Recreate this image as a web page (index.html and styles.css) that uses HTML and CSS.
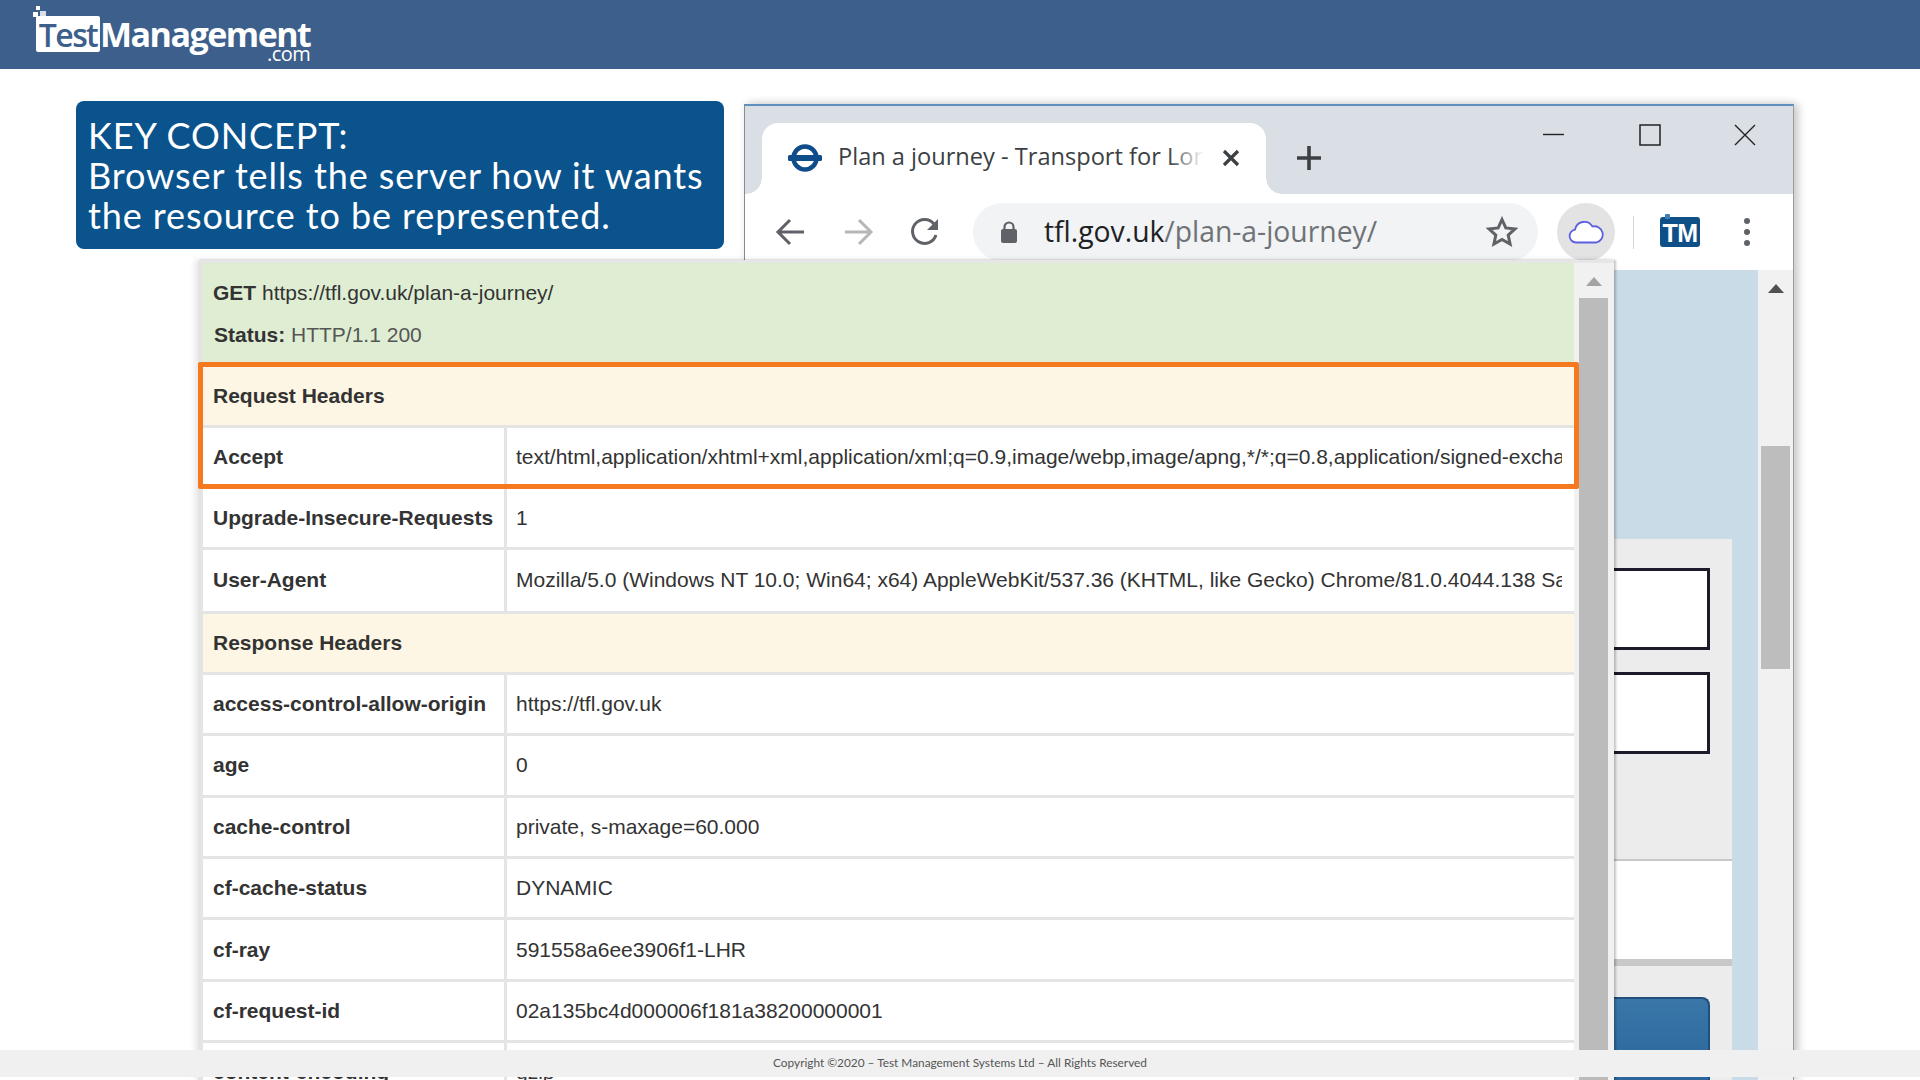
FILE: index.html
```html
<!DOCTYPE html>
<html>
  <head>
    <meta charset="utf-8">
    <title>Key concept</title>
    <link rel="stylesheet" href="styles.css">
  </head>
  <body>
    <header class="site-header">
      <div class="logo">
        <svg class="logo__dots" width="14" height="14" viewBox="0 0 14 14">
          <rect x="3" y="0" width="4" height="4" fill="#fff"/>
          <rect x="0" y="6" width="5" height="5" fill="#fff"/>
          <rect x="7" y="5" width="6" height="6" fill="#fff" opacity=".8"/>
        </svg>
        <span class="logo__test">Test</span>
        <span class="logo__name">Management<small>.com</small></span>
      </div>
    </header>

    <section class="callout">
      KEY CONCEPT:<br>
      Browser tells the server how it wants<br>
      the resource to be represented.
    </section>

    <!-- browser window behind the extension popup -->
    <section class="browser">
      <div class="tabstrip">
        <div class="tab">
          <svg class="tab__icon" width="36" height="28" viewBox="0 0 36 28">
            <circle cx="18" cy="14" r="11.5" fill="none" stroke="#0f4c8a" stroke-width="4.5"/>
            <rect x="1" y="11" width="34" height="6" rx="1.5" fill="#0f4c8a"/>
          </svg>
          <span class="tab__title">Plan a journey - Transport for London</span>
          <svg class="tab__close" width="18" height="18" viewBox="0 0 18 18">
            <path d="M2 2l14 14M16 2L2 16" stroke="#3c4043" stroke-width="3.2" fill="none"/>
          </svg>
        </div>
        <svg class="tab-new" width="26" height="26" viewBox="0 0 26 26">
          <path d="M13 1v24M1 13h24" stroke="#3c4043" stroke-width="3.6" fill="none"/>
        </svg>
        <div class="winctrls">
          <div class="winctrl"><svg width="22" height="22" viewBox="0 0 22 22"><path d="M0 10.5h21" stroke="#222" stroke-width="1.4"/></svg></div>
          <div class="winctrl"><svg width="22" height="22" viewBox="0 0 22 22"><rect x="1" y="1" width="20" height="20" fill="none" stroke="#222" stroke-width="1.5"/></svg></div>
          <div class="winctrl"><svg width="22" height="22" viewBox="0 0 22 22"><path d="M1 1l20 20M21 1L1 21" stroke="#222" stroke-width="1.4" fill="none"/></svg></div>
        </div>
      </div>

      <div class="toolbar">
        <svg class="navbtn" width="40" height="32" viewBox="0 0 40 32">
          <path d="M33 16H9M19 4L7 16l12 12" stroke="#5f6368" stroke-width="3" fill="none"/>
        </svg>
        <svg class="navbtn navbtn--next" width="40" height="32" viewBox="0 0 40 32">
          <path d="M7 16h24M21 4l12 12-12 12" stroke="#b4b6b9" stroke-width="3" fill="none"/>
        </svg>
        <svg class="navbtn navbtn--next" width="40" height="32" viewBox="0 0 40 32">
          <path d="M31 19a12 12 0 1 1-2-11" stroke="#5f6368" stroke-width="3" fill="none"/>
          <path d="M33 3v11H22z" fill="#5f6368"/>
        </svg>
        <div class="omnibox">
          <svg class="omnibox__lock" width="18" height="24" viewBox="0 0 18 24">
            <path d="M4.5 10V7a4.5 4.5 0 0 1 9 0v3" fill="none" stroke="#5f6368" stroke-width="2.2"/>
            <rect x="1" y="9" width="16" height="14" rx="2" fill="#5f6368"/>
          </svg>
          <span class="omnibox__url">tfl.gov.uk<span class="omnibox__path">/plan-a-journey/</span></span>
          <svg class="omnibox__star" width="32" height="32" viewBox="0 0 32 32">
            <path d="M16 3.5l3.8 8.4 9.2 1-6.8 6.2 1.9 9-8.1-4.6-8.1 4.6 1.9-9L3 12.9l9.2-1z" fill="none" stroke="#5f6368" stroke-width="3"/>
          </svg>
        </div>
        <div class="ext-cloud">
          <svg width="36" height="26" viewBox="0 0 36 26">
            <path d="M8 23.5a6.5 6.5 0 0 1-1-12.9A9.5 9.5 0 0 1 24.500 7.500 8 8 0 0 1 28.500 23.500z" fill="#fff" stroke="#5b5fe0" stroke-width="1.800"/>
          </svg>
        </div>
        <div class="toolbar__divider"></div>
        <div class="ext-tm">TM</div>
        <div class="kebab"><i></i><i></i><i></i></div>
      </div>

      <div class="viewport">
        <div class="viewport__main">
          <div class="form-panel">
            <div class="form-input"></div>
            <div class="form-input"></div>
            <div class="form-strip"></div>
            <div class="form-button"></div>
          </div>
        </div>
        <div class="scrollbar scrollbar--page">
          <span class="scrollbar__up"></span>
          <div class="scrollbar__thumb"></div>
        </div>
      </div>
    </section>

    <!-- extension popup -->
    <section class="popup">
      <div class="popup__body">
        <div class="summary">
          <p><b>GET</b> https://tfl.gov.uk/plan-a-journey/</p>
          <p class="summary__status"><b>Status:</b> <span>HTTP/1.1 200</span></p>
        </div>
        <div class="highlight">
          <div class="row row--head row--h61"><b>Request Headers</b></div>
          <div class="row row--h56 row--last"><b>Accept</b><span>text/html,application/xhtml+xml,application/xml;q=0.9,image/webp,image/apng,*/*;q=0.8,application/signed-exchange;v=b3;q=0.9</span></div>
        </div>
        <div class="row row--h61"><b>Upgrade-Insecure-Requests</b><span>1</span></div>
        <div class="row row--h63"><b>User-Agent</b><span>Mozilla/5.0 (Windows NT 10.0; Win64; x64) AppleWebKit/537.36 (KHTML, like Gecko) Chrome/81.0.4044.138 Safari/537.36</span></div>
        <div class="row row--head"><b>Response Headers</b></div>
        <div class="row"><b>access-control-allow-origin</b><span>https://tfl.gov.uk</span></div>
        <div class="row"><b>age</b><span>0</span></div>
        <div class="row"><b>cache-control</b><span>private, s-maxage=60.000</span></div>
        <div class="row"><b>cf-cache-status</b><span>DYNAMIC</span></div>
        <div class="row"><b>cf-ray</b><span>591558a6ee3906f1-LHR</span></div>
        <div class="row"><b>cf-request-id</b><span>02a135bc4d000006f181a38200000001</span></div>
        <div class="row"><b>content-encoding</b><span>gzip</span></div>
      </div>
      <div class="scrollbar scrollbar--popup">
        <span class="scrollbar__up"></span>
        <div class="scrollbar__thumb"></div>
      </div>
    </section>

    <footer class="site-footer">Copyright ©2020 – Test Management Systems Ltd – All Rights Reserved</footer>
  </body>
</html>
```

FILE: styles.css
```css
html, body {
  margin: 0;
  padding: 0;
}

body {
  position: relative;
  width: 1920px;
  height: 1080px;
  overflow: hidden;
  background-color: #fff;
  font-family: "Liberation Sans", Arial, sans-serif;
}

/* site header */
.site-header {
  height: 69px;
  background-color: #3d5f8b;
}

.logo {
  position: relative;
  display: flex;
  align-items: flex-start;
  padding: 16px 0 0 36px;
  font-family: "Open Sans", sans-serif;
  letter-spacing: -1.6px;
}

.logo__dots {
  position: absolute;
  left: 33px;
  top: 6px;
}

.logo__test {
  width: 64px;
  height: 36px;
  border-radius: 2px;
  background-color: #fff;
  color: #3d5f8b;
  font-size: 32px;
  font-weight: 600;
  line-height: 37px;
  text-align: center;
}

.logo__name {
  display: flex;
  flex-direction: column;
  align-items: flex-end;
  color: #fff;
  font-size: 34px;
  font-weight: 700;
  letter-spacing: -1.5px;
  line-height: 37px;
}

.logo__name small {
  margin-top: -8px;
  font-size: 20px;
  font-weight: 400;
  letter-spacing: -.5px;
  line-height: 18px;
}

/* blue note top left */
.callout {
  position: absolute;
  left: 76px;
  top: 101px;
  box-sizing: border-box;
  width: 648px;
  height: 148px;
  padding: 14px 0 0 12px;
  border-radius: 8px;
  background-color: #0a538c;
  color: #fff;
  font-family: "Lato", sans-serif;
  font-size: 36px;
  letter-spacing: .9px;
  line-height: 40px;
}

/* browser window */
.browser {
  position: absolute;
  left: 744px;
  top: 104px;
  display: flex;
  flex-direction: column;
  width: 1050px;
  height: 976px;
  border-top: 2px solid #5e8fbd;
  border-left: 1px solid #8a8a8a;
  border-right: 1px solid #9a9a9a;
  box-sizing: border-box;
  box-shadow: 5px 0 8px rgba(0, 0, 0, .18), 0 -3px 8px rgba(0, 0, 0, .06);
}

.tabstrip {
  display: flex;
  align-items: flex-end;
  flex: none;
  height: 88px;
  padding-left: 17px;
  background-color: #dadfe6;
}

.tab {
  position: relative;
  display: flex;
  align-items: center;
  box-sizing: border-box;
  width: 504px;
  height: 71px;
  padding: 0 0 0 25px;
  border-radius: 16px 16px 0 0;
  background-color: #fff;
}

.tab::before,
.tab::after {
  content: "";
  position: absolute;
  bottom: 0;
  width: 16px;
  height: 16px;
}

.tab::before {
  left: -16px;
  background: radial-gradient(circle at 0 0, #dadfe6 15.500px, #fff 16px);
}

.tab::after {
  right: -16px;
  background: radial-gradient(circle at 100% 0, #dadfe6 15.500px, #fff 16px);
}

.tab__icon {
  flex: none;
  margin-top: -2px;
}

.tab__title {
  position: relative;
  overflow: hidden;
  width: 366px;
  margin: -5px 0 0 15px;
  color: #3c4043;
  font-family: "Open Sans", sans-serif;
  font-size: 23.600px;
  white-space: nowrap;
}

.tab__title::after {
  content: "";
  position: absolute;
  top: 0;
  right: 0;
  bottom: 0;
  width: 36px;
  background: linear-gradient(to right, rgba(255, 255, 255, 0), #fff);
}

.tab__close {
  flex: none;
  margin: -2px 0 0 18px;
}

.tab-new {
  flex: none;
  align-self: flex-end;
  margin: 0 0 23px 30px;
}

.winctrls {
  display: flex;
  align-self: flex-start;
  margin-left: auto;
  padding-top: 18px;
}

.winctrl {
  display: flex;
  justify-content: center;
  width: 95.500px;
}

.toolbar {
  display: flex;
  align-items: center;
  flex: none;
  height: 76px;
  padding-left: 26px;
  background-color: #fff;
}

.navbtn--next {
  margin-left: 27px;
}

.omnibox {
  display: flex;
  align-items: center;
  box-sizing: border-box;
  width: 565px;
  height: 58px;
  margin-left: 28px;
  padding: 0 20px 0 27px;
  border-radius: 29px;
  background-color: #f1f3f4;
}

.omnibox__url {
  margin: -2px 0 0 26px;
  color: #202124;
  font-family: "Open Sans", sans-serif;
  font-size: 28.300px;
}

.omnibox__path {
  color: #6f7276;
}

.omnibox__star {
  margin-left: auto;
}

.ext-cloud {
  display: flex;
  align-items: center;
  justify-content: center;
  width: 58px;
  height: 58px;
  margin-left: 19px;
  border-radius: 50%;
  background-color: #e3e3e3;
}

.toolbar__divider {
  width: 1px;
  height: 33px;
  margin-left: 18px;
  background-color: #d5d5d5;
}

.ext-tm {
  position: relative;
  width: 40px;
  height: 30px;
  margin-left: 26px;
  border-radius: 3px;
  background-color: #0f4f87;
  color: #fff;
  font-size: 25px;
  font-weight: 700;
  letter-spacing: -.5px;
  line-height: 33px;
  text-align: center;
}

.ext-tm::before {
  content: "";
  position: absolute;
  left: 5px;
  top: -3px;
  width: 5px;
  height: 5px;
  border-radius: 1px;
  background-color: #3f7fb8;
}

.kebab {
  display: flex;
  flex-direction: column;
  gap: 5px;
  margin-left: 44px;
}

.kebab i {
  width: 6px;
  height: 6px;
  border-radius: 50%;
  background-color: #5f6368;
}

.viewport {
  display: flex;
  flex: 1;
  min-height: 0;
}

.viewport__main {
  flex: 1;
  padding: 269px 26px 0 600px;
  background-color: #c9dbe6;
}

.form-panel {
  display: flex;
  flex-direction: column;
  height: 100%;
  background-color: #ececec;
  padding: 29px 22px 0 0;
  box-sizing: border-box;
}

.form-input {
  flex: none;
  box-sizing: border-box;
  height: 82px;
  margin-bottom: 22px;
  border: 3px solid #1b1b2b;
  background-color: #fff;
}

.form-strip {
  flex: none;
  box-sizing: border-box;
  height: 107px;
  margin: 83px -22px 0 0;
  border-top: 2px solid #c8c8c8;
  border-bottom: 7px solid #c8c8c8;
  background-color: #fff;
}

.form-button {
  flex: none;
  height: 90px;
  margin-top: 31px;
  border: 2px solid #1f4f7d;
  border-bottom: 0;
  border-radius: 8px 8px 0 0;
  background: linear-gradient(#3a77a8, #29639a);
}

/* scrollbars */
.scrollbar {
  position: relative;
  flex: none;
  display: flex;
  flex-direction: column;
  align-items: center;
  background-color: #f1f1f1;
}

.scrollbar--page {
  width: 35px;
}

.scrollbar--page .scrollbar__thumb {
  position: absolute;
  top: 176px;
  width: 29px;
  height: 223px;
  background-color: #bdbdbd;
}

.scrollbar--popup .scrollbar__thumb {
  flex: 1;
  width: 29px;
  margin-right: 6px;
  background-color: #bbb;
}

.scrollbar__up {
  width: 0;
  height: 0;
  margin-top: 14px;
  border-left: 8px solid transparent;
  border-right: 8px solid transparent;
  border-bottom: 9px solid #505050;
}

.scrollbar--popup {
  align-items: flex-end;
  width: 40px;
}

.scrollbar--popup .scrollbar__up {
  margin: 14px 12px 12px 0;
  border-bottom-color: #a3a3a3;
}

/* request popup */
.popup {
  position: absolute;
  left: 198px;
  top: 260px;
  display: flex;
  box-sizing: border-box;
  width: 1416px;
  height: 820px;
  border-top: 3px solid #e6e6e6;
  padding-left: 5px;
  background-color: #e4e4e4;
  box-shadow: 2px 0 2px rgba(0, 0, 0, .22), -3px 0 6px rgba(0, 0, 0, .1);
}

.popup__body {
  flex: 1;
  min-width: 0;
  color: #333;
  font-size: 21px;
}

.summary {
  box-sizing: border-box;
  height: 99px;
  padding: 18px 10px 0;
  background-color: #dfeed3;
}

.summary p {
  margin: 0;
  line-height: 24px;
}

.summary__status {
  margin-top: 18px !important;
  padding-left: 1px;
}

.summary__status span {
  color: #565656;
}

.highlight {
  position: relative;
  z-index: 1;
  height: 127px;
  margin: 0 -5px;
  box-sizing: border-box;
  border: 5px solid #f5791f;
  border-radius: 2px;
}

.row {
  display: grid;
  grid-template-columns: 301px 1fr;
  align-items: center;
  box-sizing: border-box;
  height: 61.400px;
  border-bottom: 3px solid #e4e4e4;
  background-image: linear-gradient(#e4e4e4, #e4e4e4);
  background-position: 301px 0;
  background-repeat: no-repeat;
  background-size: 3px 100%;
  background-color: #fff;
}

.row--h61 {
  height: 61px;
}

.row--h56 {
  height: 56px;
}

.row--h63 {
  height: 63.500px;
}

.row--last {
  border-bottom: 0;
  padding-top: 2px;
}

.row--head {
  background-color: #fdf6e4;
  background-image: none;
}

.row b {
  padding-left: 10px;
}

.row span {
  overflow: hidden;
  margin-right: 12px;
  padding-left: 12px;
  white-space: nowrap;
}

/* bottom bar */
.site-footer {
  position: absolute;
  left: 0;
  right: 0;
  top: 1050px;
  height: 27px;
  background-color: #f0f0f0;
  color: #555;
  font-family: "Lato", sans-serif;
  font-size: 11.850px;
  line-height: 25px;
  text-align: center;
}
```
